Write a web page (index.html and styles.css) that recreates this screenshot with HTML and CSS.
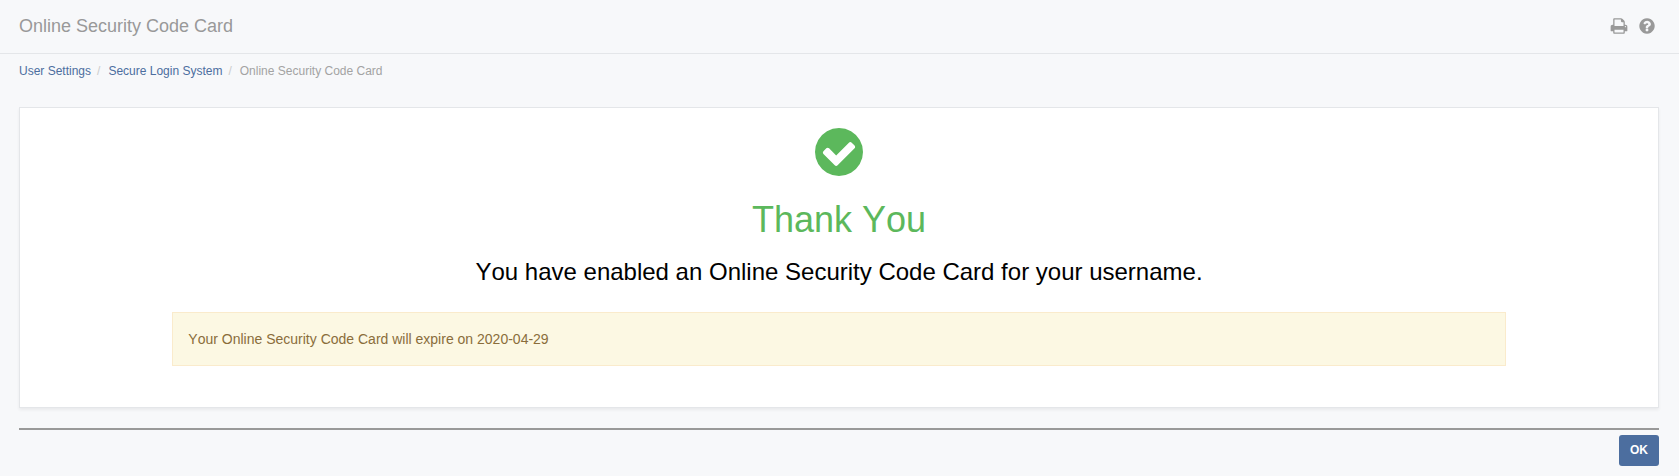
FILE: index.html
```
<!DOCTYPE html>
<html lang="en">
<head>
<meta charset="utf-8">
<meta name="viewport" content="width=device-width, initial-scale=1">
<title>Online Security Code Card</title>
<link rel="stylesheet" href="styles.css">
</head>
<body>
<header class="page-header">
  <h1 class="page-title">Online Security Code Card</h1>
  <div class="tools">
    <button class="tool" type="button" aria-label="Print">
      <svg class="tool-icon" viewBox="0 0 1792 1792" aria-hidden="true"><path d="M448 1536h896v-256h-896v256zm0-640h896v-384h-160q-40 0-68-28t-28-68v-160h-640v640zm1152 64q0-26-19-45t-45-19-45 19-19 45 19 45 45 19 45-19 19-45zm128 0v416q0 13-9.500 22.500t-22.500 9.500h-224v160q0 40-28 68t-68 28h-960q-40 0-68-28t-28-68v-160h-224q-13 0-22.500-9.500t-9.500-22.500v-416q0-79 56.500-135.500t135.500-56.500h64v-544q0-40 28-68t68-28h672q40 0 88 20t76 48l152 152q28 28 48 76t20 88v256h64q79 0 135.500 56.500t56.500 135.500z"/></svg>
    </button>
    <button class="tool" type="button" aria-label="Help">
      <svg class="tool-icon" viewBox="0 0 1792 1792" aria-hidden="true"><path d="M1024 1376v-192q0-14-9-23t-23-9h-192q-14 0-23 9t-9 23v192q0 14 9 23t23 9h192q14 0 23-9t9-23zm256-672q0-88-55.500-163t-138.500-116-170-41q-243 0-371 213-15 24 8 42l132 100q7 6 19 6 16 0 25-12 53-68 86-92 34-24 86-24 48 0 85.500 26t37.500 59q0 38-20 61t-68 45q-63 28-115.500 86.500t-52.500 125.500v36q0 14 9 23t23 9h192q14 0 23-9t9-23q0-19 21.500-49.500t54.500-49.500q32-18 49-28.500t46-35 44.500-48 28-60.500 12.500-81zm384 192q0 209-103 385.500t-279.500 279.500-385.500 103-385.500-103-279.500-279.500-103-385.500 103-385.500 279.500-279.500 385.500-103 385.500 103 279.500 279.500 103 385.500z"/></svg>
    </button>
  </div>
</header>
<nav aria-label="Breadcrumb">
  <ol class="breadcrumb">
    <li class="crumb"><a class="crumb-link" href="#">User Settings</a></li>
    <li class="crumb"><a class="crumb-link" href="#">Secure Login System</a></li>
    <li class="crumb" aria-current="page">Online Security Code Card</li>
  </ol>
</nav>
<main class="content">
  <section class="panel">
    <svg class="success-icon" viewBox="0 0 1792 1792" aria-hidden="true"><path d="M1412 734q0-28-18-46l-91-90q-19-19-45-19t-45 19l-408 407-226-226q-19-19-45-19t-45 19l-91 90q-18 18-18 46 0 27 18 45l362 362q19 19 45 19 27 0 46-19l543-543q18-18 18-45zm252 162q0 209-103 385.500t-279.500 279.500-385.500 103-385.500-103-279.500-279.500-103-385.500 103-385.500 279.500-279.500 385.500-103 385.500 103 279.500 279.500 103 385.500z"/></svg>
    <h2 class="headline">Thank You</h2>
    <p class="message">You have enabled an Online Security Code Card for your username.</p>
    <p class="notice">Your Online Security Code Card will expire on 2020-04-29</p>
  </section>
  <div class="actions">
    <button class="ok-button" type="button">OK</button>
  </div>
</main>
</body>
</html>
```
FILE: styles.css
```
* {
  box-sizing: border-box;
}

body {
  margin: 0;
  background: #f7f8fa;
  color: #000;
  font-family: "Liberation Sans", Arial, sans-serif;
  font-size: 14px;
  line-height: 20px;
  font-kerning: none;
}

h1, h2, p, ol {
  margin: 0;
  padding: 0;
  font-weight: 400;
}

.page-header {
  display: flex;
  align-items: center;
  justify-content: space-between;
  padding: 16px 23px 17px 19px;
  border-bottom: 1px solid #e4e6e9;
}

.page-title {
  color: #999;
  font-size: 18px;
  line-height: 20px;
}

.tools {
  display: flex;
  gap: 10px;
}

.tool {
  display: block;
  padding: 0;
  border: 0;
  background: none;
  cursor: pointer;
}

.tool-icon {
  display: block;
  width: 18px;
  height: 18px;
  fill: #999;
}

.breadcrumb {
  display: flex;
  flex-wrap: wrap;
  padding: 7px 19px 0;
  color: #a3a3a3;
  font-size: 12px;
  line-height: 20px;
  list-style: none;
}

.crumb + .crumb::before {
  content: "/";
  padding: 0 8px 0 6px;
  color: #ccc;
}

.crumb-link {
  color: #4c6e9f;
  text-decoration: none;
}

.content {
  padding: 26px 20px 10px 19px;
}

.panel {
  display: flex;
  flex-direction: column;
  align-items: center;
  padding: 16px 19px 41px;
  border: 1px solid #e4e6e9;
  background: #fff;
  box-shadow: 0 2px 3px rgba(0, 0, 0, 0.06);
}

.success-icon {
  width: 56px;
  height: 56px;
  fill: #5cb85c;
}

.headline {
  margin-top: 20px;
  color: #5cb85c;
  font-size: 36px;
  line-height: 40px;
}

.message {
  margin-top: 19px;
  font-size: 24px;
  line-height: 26px;
  text-align: center;
}

.notice {
  width: 83.333%;
  margin-top: 27px;
  padding: 16px 15px;
  border: 1px solid #faebcc;
  background: #fcf8e3;
  color: #8a6d3b;
}

.actions {
  display: flex;
  justify-content: flex-end;
  margin-top: 20px;
  padding-top: 5px;
  border-top: 2px solid #999;
}

.ok-button {
  padding: 5px 11px 6px;
  border: 0;
  border-radius: 3px;
  background: #4c6e9f;
  color: #fff;
  font: bold 12px/20px "Liberation Sans", Arial, sans-serif;
  cursor: pointer;
}
```
